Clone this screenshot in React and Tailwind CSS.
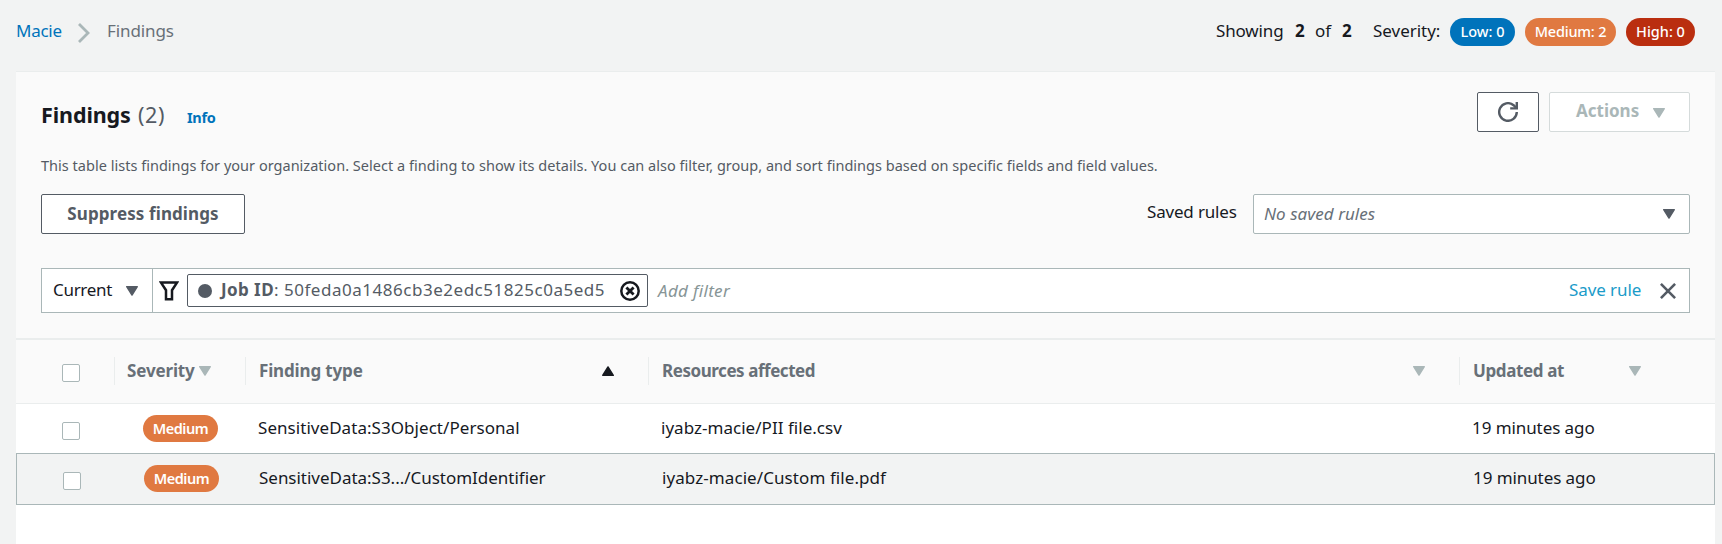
import React from "react";

function Caret({ className = "", up = false }) {
  return (
    <svg viewBox="0 0 12 10" className={`h-[10px] w-[12px] shrink-0 ${className}`} fill="currentColor" stroke="currentColor" strokeWidth="1.4" strokeLinejoin="round">
      {up ? <path d="M6 .9 11.3 9.3H.7Z" /> : <path d="M.7.7h10.6L6 9.1Z" />}
    </svg>
  );
}

function Pill({ className, children }) {
  return (
    <span className={`flex h-[28px] items-center justify-center rounded-full pb-[2px] text-[14.5px] font-medium text-white ${className}`}>
      {children}
    </span>
  );
}

function Checkbox({ className = "" }) {
  return <span className={`block size-[18px] shrink-0 rounded-[2px] border border-[#aab7b8] bg-white ${className}`} />;
}

function Row({ type, typeClass, resource, resourceClass, selected }) {
  return (
    <div
      className={
        selected
          ? "flex h-[52px] items-center border border-[#aab7b8] bg-[#f2f3f3] pb-[3px]"
          : "flex h-[49px] items-center pb-px"
      }
    >
      <div className="w-[127px] shrink-0 pl-[46px] pt-[6px]">
        <Checkbox />
      </div>
      <div className="w-[115px] shrink-0 pt-px">
        <span className="flex h-[27px] w-[75px] items-center justify-center rounded-full bg-[#e07941] pb-px text-[14.5px] font-semibold tracking-[-0.5px] text-white">
          Medium
        </span>
      </div>
      <div className={`w-[403px] shrink-0 ${typeClass}`}>{type}</div>
      <div className={`w-[811px] shrink-0 ${resourceClass}`}>{resource}</div>
      <div className="tracking-[-0.08px]">19 minutes ago</div>
    </div>
  );
}

export default function App() {
  return (
    <div className="flex h-[544px] w-[1722px] flex-col overflow-hidden whitespace-nowrap bg-[#f2f3f3] font-['Noto_Sans',sans-serif] text-[17px] leading-[24px] text-[#16191f]">
      <header className="flex h-[71px] shrink-0 items-start pl-4 pr-[27px] pt-[18px]">
        <nav className="flex h-[26px] items-center">
          <a className="w-[62px] tracking-[-0.25px] text-[#0073bb]">Macie</a>
          <svg viewBox="0 0 12 20" className="mt-1 h-[20px] w-[12px]" fill="none" stroke="#aab7b8" strokeWidth="2.8">
            <path d="m1 1 9 9-9 9" />
          </svg>
          <span className="ml-[17px] tracking-[-0.1px] text-[#687078]">Findings</span>
        </nav>
        <div className="ml-auto flex items-center">
          <div className="flex h-[28px] items-center pb-[3px]">
            <span className="w-[79px] tracking-[-0.15px]">Showing</span>
            <span className="w-[20px] font-bold">2</span>
            <span className="w-[27px]">of</span>
            <span className="w-[31px] font-bold">2</span>
            <span className="w-[77px] tracking-[-0.03px]">Severity:</span>
          </div>
          <div className="flex gap-[10px]">
            <Pill className="w-[65px] bg-[#0073bb]">Low: 0</Pill>
            <Pill className="w-[91px] bg-[#e07941] tracking-[-0.2px]">Medium: 2</Pill>
            <Pill className="w-[69px] bg-[#ba2e0f]">High: 0</Pill>
          </div>
        </div>
      </header>

      <main className="ml-4 flex w-[1699px] flex-1 flex-col border-t border-[#eaeded] bg-white">
        <section className="h-[266px] shrink-0 bg-[#fafafa] px-[25px] pt-[20px]">
          <div className="flex h-[40px] justify-between">
            <div className="flex items-baseline pt-[11px]">
              <h1 className="w-[97px] text-[21.5px] font-bold tracking-[-0.1px]">Findings</h1>
              <span className="w-[49px] text-[21.5px] tracking-[0.6px] text-[#545b64]">(2)</span>
              <a className="text-[14.5px] font-bold tracking-[-0.3px] text-[#0073bb]">Info</a>
            </div>
            <div className="flex gap-[10px]">
              <button className="flex h-[40px] w-[62px] items-center justify-center rounded-[2px] border border-[#545b64] bg-white">
                <svg viewBox="0 0 20 20" className="size-[20px]" fill="none" stroke="#545b64" strokeWidth="2.4">
                  <path d="M18.8 10A8.8 8.8 0 1 1 15.6 3.2l2.4 2.4" />
                  <path d="M18.8 0v6.4h-6.6" />
                </svg>
              </button>
              <button className="flex h-[40px] w-[141px] items-center rounded-[2px] border border-[#d5dbdb] bg-white pb-[3px] pl-[26px] text-left font-bold text-[#aab7b8]">
                <span className="w-[77px]">Actions</span>
                <Caret className="mt-[4px]" />
              </button>
            </div>
          </div>

          <p className="mt-[21px] h-[25px] text-[14.5px] tracking-[0.02px] text-[#545b64]">
            This table lists findings for your organization. Select a finding to show its details. You can also filter, group, and sort findings based on specific fields and field values.
          </p>

          <div className="mt-[16px] flex h-[40px] justify-between">
            <button className="flex h-[40px] w-[204px] items-center justify-center rounded-[2px] border border-[#545b64] bg-white pb-px font-bold tracking-[0.1px] text-[#545b64]">
              Suppress findings
            </button>
            <div className="flex">
              <span className="w-[106px] pt-[6px] tracking-[-0.18px]">Saved rules</span>
              <div className="flex h-[40px] w-[437px] items-center justify-between rounded-[2px] border border-[#aab7b8] bg-white pl-[10px] pr-[14px]">
                <span className="pb-px italic tracking-[0.05px] text-[#687078]">No saved rules</span>
                <Caret className="text-[#545b64]" />
              </div>
            </div>
          </div>

          <div className="mt-[34px] flex h-[45px] items-center border border-[#aab7b8] bg-white">
            <div className="flex h-full w-[111px] items-center border-r border-[#aab7b8] pl-[11px]">
              <span className="w-[73px] pb-[2px] tracking-[-0.31px]">Current</span>
              <Caret className="text-[#545b64]" />
            </div>
            <svg viewBox="0 0 20 20" className="ml-[6px] h-[20px] w-[20px]" fill="none" stroke="#16191f" strokeWidth="2.5">
              <path d="M2 1.6h16l-5 7.6v9H7v-9Z" />
            </svg>
            <div className="ml-[8px] flex h-[33px] w-[461px] items-center rounded-[2px] border border-[#545b64] bg-white pl-[10px] text-[#545b64]">
              <span className="size-[14px] shrink-0 rounded-full bg-[#545b64]" />
              <span className="ml-[9px] pb-[2px] font-bold tracking-[0.42px]">Job ID</span>
              <span className="w-[346px] pb-[2px] tracking-[0.52px]">: 50feda0a1486cb3e2edc51825c0a5ed5</span>
              <svg viewBox="0 0 20 20" className="size-[20px] shrink-0" fill="none" stroke="#16191f" strokeWidth="2.5">
                <circle cx="10" cy="10" r="8.7" />
                <path d="m6.4 6.4 7.2 7.2m0-7.2-7.2 7.2" strokeWidth="2.8" />
              </svg>
            </div>
            <span className="ml-[10px] italic tracking-[0.33px] text-[#879596]">Add filter</span>
            <a className="ml-auto w-[91px] pb-[2px] tracking-[-0.08px] text-[#1a9bc9]">Save rule</a>
            <svg viewBox="0 0 16 16" className="mr-[13px] size-[16px]" fill="none" stroke="#545b64" strokeWidth="2.6">
              <path d="m.9.9 14.2 14.2M15.1.9.9 15.1" />
            </svg>
          </div>
        </section>

        <section className="flex flex-col">
          <div className="flex h-[66px] items-center border-b border-t-2 border-[#eaeded] bg-[#fafafa] pb-px font-bold text-[#687078]">
            <div className="flex w-[98px] shrink-0 pl-[46px] pt-[3px]">
              <Checkbox />
            </div>
            <div className="flex h-[28px] w-[131px] shrink-0 items-center border-l border-[#eaeded] pl-[12px]">
              <span className="w-[72px] tracking-[-0.15px]">Severity</span>
              <Caret className="text-[#aab7b8]" />
            </div>
            <div className="flex h-[28px] w-[403px] shrink-0 items-center border-l border-[#eaeded] pl-[13px]">
              <span className="w-[343px] tracking-[-0.15px]">Finding type</span>
              <Caret up className="text-[#16191f]" />
            </div>
            <div className="flex h-[28px] w-[811px] shrink-0 items-center border-l border-[#eaeded] pl-[13px]">
              <span className="w-[751px] tracking-[-0.45px]">Resources affected</span>
              <Caret className="text-[#aab7b8]" />
            </div>
            <div className="flex h-[28px] flex-1 items-center border-l border-[#eaeded] pl-[13px]">
              <span className="w-[156px] tracking-[-0.38px]">Updated at</span>
              <Caret className="text-[#aab7b8]" />
            </div>
          </div>
          <Row
            type="SensitiveData:S3Object/Personal"
            typeClass="tracking-[0.05px]"
            resource="iyabz-macie/PII file.csv"
            resourceClass="tracking-[0.03px]"
          />
          <Row
            selected
            type="SensitiveData:S3.../CustomIdentifier"
            typeClass="tracking-[-0.02px]"
            resource="iyabz-macie/Custom file.pdf"
            resourceClass="tracking-[0.08px]"
          />
        </section>
      </main>
    </div>
  );
}
